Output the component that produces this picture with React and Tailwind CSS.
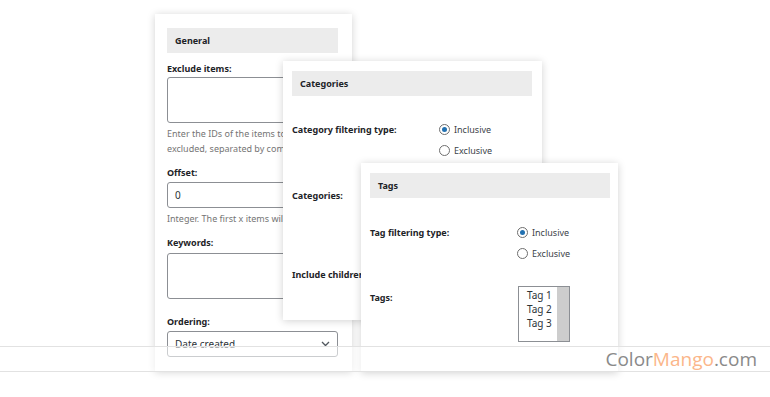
import React from "react";

const font = { fontFamily: '"Noto Sans", "Open Sans", sans-serif' };

function Radio({ checked, label }) {
  return (
    <div className="flex items-center h-[21px]">
      <span className="w-[11px] h-[11px] rounded-full border border-[#6e6e6e] bg-white flex items-center justify-center">
        {checked && <span className="w-[5px] h-[5px] rounded-full bg-[#2271b1]" />}
      </span>
      <span className="ml-[4px] text-[9px] text-[#3c434a]">{label}</span>
    </div>
  );
}

function Label({ children, className = "" }) {
  return <div className={"text-[9px] font-bold text-[#1d2327] leading-[12px] " + className}>{children}</div>;
}

function Header({ children }) {
  return (
    <div className="h-[25px] bg-[#ececec] flex items-center px-[8px] text-[9px] font-bold text-[#1d2327]">
      {children}
    </div>
  );
}

export default function App() {
  return (
    <div className="relative w-[770px] h-[397px] bg-white overflow-hidden" style={font}>
      {/* Panel General */}
      <div className="absolute left-[155px] top-[14px] w-[197px] h-[357px] bg-white shadow-[0_1px_8px_rgba(0,0,0,0.18)] pl-[12px] pr-[14px] pt-[14px]">
        <Header>General</Header>
        <Label className="mt-[10px]">Exclude items:</Label>
        <div className="mt-[2px] h-[46px] border border-[#8c8f94] rounded-[3px]" />
        <div className="mt-[3px] text-[9px] leading-[15px] text-[#757575]">
          Enter the IDs of the items to be<br />excluded, separated by commas.
        </div>
        <Label className="mt-[11px]">Offset:</Label>
        <div className="mt-[3px] h-[26px] border border-[#8c8f94] rounded-[3px] flex items-center px-[7px] text-[10px] text-[#2c3338]">0</div>
        <div className="mt-[3px] text-[9px] leading-[15px] text-[#757575]">Integer. The first x items will be skipped.</div>
        <Label className="mt-[11px]">Keywords:</Label>
        <div className="mt-[4px] h-[46px] border border-[#8c8f94] rounded-[3px]" />
        <Label className="mt-[17px]">Ordering:</Label>
        <div className="mt-[3px] h-[26px] border border-[#8c8f94] rounded-[3px] flex items-center justify-between px-[7px] text-[10px] text-[#2c3338]">
          <span>Date created</span>
          <svg width="9" height="6" viewBox="0 0 9 6" fill="none" stroke="#50575e" strokeWidth="1.3">
            <path d="M1 1l3.5 3.5L8 1" />
          </svg>
        </div>
      </div>

      {/* Panel Categories */}
      <div className="absolute left-[283px] top-[61px] w-[259px] h-[259px] bg-white shadow-[0_1px_8px_rgba(0,0,0,0.18)] pl-[9px] pr-[10px] pt-[10px]">
        <Header>Categories</Header>
        <div className="grid grid-cols-[147px_1fr] mt-[27px]">
          <Label className="pt-[1px]">Category filtering type:</Label>
          <div className="-mt-[4px]">
            <Radio checked label="Inclusive" />
            <Radio label="Exclusive" />
          </div>
        </div>
        <Label className="mt-[29px]">Categories:</Label>
        <Label className="mt-[67px]">Include children</Label>
      </div>

      {/* Panel Tags */}
      <div className="absolute left-[361px] top-[163px] w-[257px] h-[209px] bg-white shadow-[0_1px_8px_rgba(0,0,0,0.18)] pl-[9px] pr-[8px] pt-[10px]">
        <Header>Tags</Header>
        <div className="grid grid-cols-[147px_1fr] mt-[28px]">
          <Label className="pt-[1px]">Tag filtering type:</Label>
          <div className="-mt-[4px]">
            <Radio checked label="Inclusive" />
            <Radio label="Exclusive" />
          </div>
        </div>
        <div className="grid grid-cols-[148px_1fr] mt-[22px]">
          <Label className="mt-[6px]">Tags:</Label>
          <div className="w-[52px] h-[56px] border border-[#8c8f94] flex">
            <div className="flex-1 pl-[8px] text-[10px] leading-[14px] text-[#2c3338] pt-[1px]">
              <div>Tag 1</div>
              <div>Tag 2</div>
              <div>Tag 3</div>
            </div>
            <div className="w-[12px] bg-[#cdcdcd]" />
          </div>
        </div>
      </div>

      {/* Watermark band */}
      <div className="absolute left-0 right-0 top-[346px] h-[26px] bg-white/55 border-y border-[#e2e2e2] flex items-center justify-end pr-[13px]">
        <span className="text-[19px] leading-none" style={{ fontFamily: '"Open Sans", sans-serif' }}>
          <span className="text-[#8a8a8a]">Color</span>
          <span className="text-[#fbb68a]">Mango</span>
          <span className="text-[#8a8a8a]">.com</span>
        </span>
      </div>
    </div>
  );
}
